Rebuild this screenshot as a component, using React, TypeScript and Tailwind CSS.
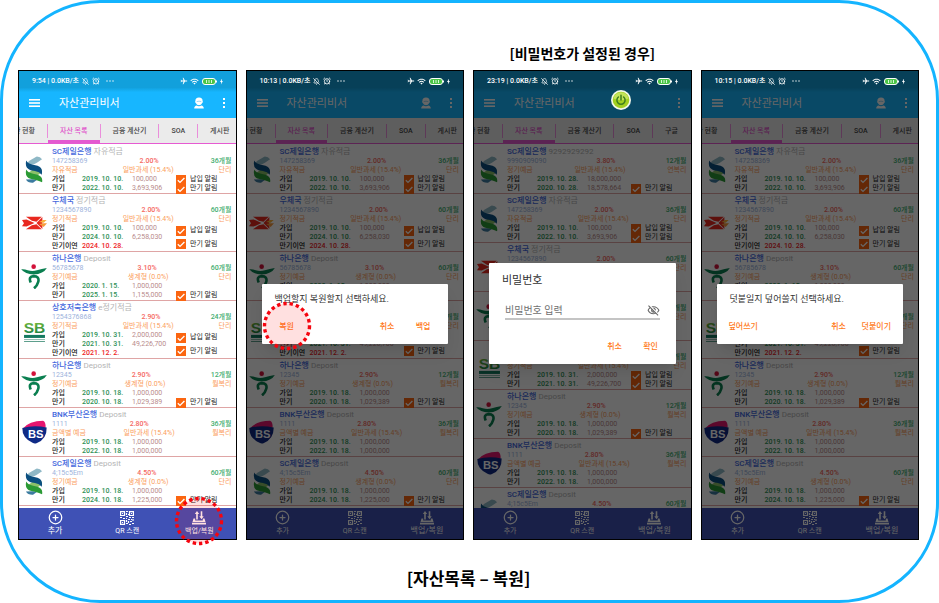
import React from "react";
import { CirclePlus, BellOff, AlarmClock } from "lucide-react";
import { MdWifi, MdBolt, MdOutlineVisibilityOff, MdAirplanemodeActive } from "react-icons/md";

type Logo = "sc" | "post" | "hana" | "sb" | "bs";

interface Entry {
  label: string;
  date: string;
  amount?: string;
  late?: boolean;
}

interface Asset {
  logo: Logo;
  bank: string;
  product: string;
  account: string;
  rate: string;
  months: string;
  type: string;
  tax: string;
  interest: string;
  entries: Entry[];
  alarms: string[];
}

const JOIN = "가입";
const DUE = "만기";
const BOTH = ["납입 알림", "만기 알림"];
const ONE = ["만기 알림"];

const scSavings: Asset = {
  logo: "sc", bank: "SC제일은행", product: "자유적금", account: "147258369", rate: "2.00%", months: "36개월",
  type: "자유적금", tax: "일반과세 (15.4%)", interest: "단리",
  entries: [
    { label: JOIN, date: "2019. 10. 10.", amount: "100,000" },
    { label: DUE, date: "2022. 10. 10.", amount: "3,693,906" },
  ],
  alarms: BOTH,
};

const post: Asset = {
  logo: "post", bank: "우체국", product: "정기적금", account: "1234567890", rate: "2.00%", months: "60개월",
  type: "정기적금", tax: "일반과세 (15.4%)", interest: "단리",
  entries: [
    { label: JOIN, date: "2019. 10. 10.", amount: "100,000" },
    { label: DUE, date: "2024. 10. 10.", amount: "6,258,030" },
    { label: "만기이연", date: "2024. 10. 28.", late: true },
  ],
  alarms: BOTH,
};

const hanaLong: Asset = {
  logo: "hana", bank: "하나은행", product: "Deposit", account: "56785678", rate: "3.10%", months: "60개월",
  type: "정기예금", tax: "생계형 (0.0%)", interest: "단리",
  entries: [
    { label: JOIN, date: "2020. 1. 15.", amount: "1,000,000" },
    { label: DUE, date: "2025. 1. 15.", amount: "1,155,000" },
  ],
  alarms: ONE,
};

const mutual: Asset = {
  logo: "sb", bank: "상호저축은행", product: "e정기적금", account: "1254376868", rate: "2.90%", months: "24개월",
  type: "정기적금", tax: "일반과세 (15.4%)", interest: "단리",
  entries: [
    { label: JOIN, date: "2019. 10. 31.", amount: "2,000,000" },
    { label: DUE, date: "2021. 10. 31.", amount: "49,226,700" },
    { label: "만기이연", date: "2021. 12. 2.", late: true },
  ],
  alarms: BOTH,
};

const hanaShort: Asset = {
  logo: "hana", bank: "하나은행", product: "Deposit", account: "12345", rate: "2.90%", months: "12개월",
  type: "정기예금", tax: "생계형 (0.0%)", interest: "월복리",
  entries: [
    { label: JOIN, date: "2019. 10. 18.", amount: "1,000,000" },
    { label: DUE, date: "2020. 10. 18.", amount: "1,029,389" },
  ],
  alarms: ONE,
};

const busan: Asset = {
  logo: "bs", bank: "BNK부산은행", product: "Deposit", account: "1111", rate: "2.80%", months: "36개월",
  type: "금액별 예금", tax: "일반과세 (15.4%)", interest: "월복리",
  entries: [
    { label: JOIN, date: "2019. 10. 18.", amount: "1,000,000" },
    { label: DUE, date: "2022. 10. 18.", amount: "1,000,000" },
  ],
  alarms: [],
};

const scDeposit: Asset = {
  logo: "sc", bank: "SC제일은행", product: "Deposit", account: "4;15c5Em", rate: "4.50%", months: "60개월",
  type: "정기예금", tax: "생계형 (0.0%)", interest: "단리",
  entries: [
    { label: JOIN, date: "2019. 10. 18.", amount: "1,000,000" },
    { label: DUE, date: "2024. 10. 18.", amount: "1,225,000" },
  ],
  alarms: ONE,
};

const scNine: Asset = {
  logo: "sc", bank: "SC제일은행", product: "9292929292", account: "9990909090", rate: "3.80%", months: "12개월",
  type: "정기예금", tax: "일반과세 (15.4%)", interest: "연복리",
  entries: [
    { label: JOIN, date: "2019. 10. 28.", amount: "18,000,000" },
    { label: DUE, date: "2020. 10. 28.", amount: "18,578,664" },
  ],
  alarms: ONE,
};

const withoutLate = (asset: Asset): Asset => ({
  ...asset,
  entries: asset.entries.filter((entry) => !entry.late),
});

const mainList = [scSavings, post, hanaLong, mutual, hanaShort, busan, scDeposit];
const lockedList = [scNine, scSavings, withoutLate(post), hanaLong, withoutLate(mutual), hanaShort, busan, scDeposit];

function BankLogo({ logo }: { logo: Logo }) {
  switch (logo) {
    case "sc":
      return (
        <svg viewBox="0 0 54 84" className="h-[27px] w-[18px]" aria-hidden="true">
          <path d="M34 2Q46 1 52 10L36 21Q24 29 12 26Q2 22 14 14Z" fill="#8fb8c6" />
          <path d="M50 42Q56 48 44 56L30 66L8 54L32 36Z" fill="#8cc06a" />
          <path d="M22 72L38 73L24 83Q8 84 2 73Z" fill="#3c7ba0" />
          <path d="M3 14Q8 24 24 27L38 30Q56 36 51 58Q44 50 30 47L16 44Q-3 38 3 14Z" fill="#0b4f80" />
          <path d="M3 42Q8 52 24 55L38 58Q56 64 52 82Q44 77 30 74L16 71Q-3 65 3 42Z" fill="#2b9a35" />
        </svg>
      );
    case "post":
      return (
        <svg viewBox="0 0 76 42" className="h-[14px] w-[25px]" aria-hidden="true">
          <path d="M12 2H60L44 17L30 14Z" fill="#e8281f" />
          <path d="M12 40H60L44 25L30 28Z" fill="#e8281f" />
          <path d="M0 12L14 10L38 21L14 32L0 31L6 22Z" fill="#e8281f" />
          <path d="M44 21L62 3V39Z" fill="#e8281f" />
          <path d="M52 18L64 12H75L66 20Z" fill="#f9b13a" />
          <path d="M52 24L66 22H76L66 33Z" fill="#f79a3c" />
        </svg>
      );
    case "hana":
      return (
        <svg viewBox="0 0 78 76" className="h-[25px] w-[26px]" aria-hidden="true">
          <path d="M0 16Q10 15 20 19Q34 24 48 19Q62 14 78 12Q68 30 38 32Q12 31 0 16Z" fill="#0a7f50" />
          <circle cx="38" cy="8" r="7" fill="#d2123a" />
          <path d="M29 56Q21 38 38 37Q56 37 52 54Q49 66 39 74" fill="none" stroke="#0a7f50" strokeWidth="8" />
        </svg>
      );
    case "sb":
      return (
        <svg viewBox="0 0 62 80" className="h-[27px] w-[21px]" aria-hidden="true">
          <defs>
            <linearGradient id="sbGreen" x1="0" y1="0" x2="0" y2="1">
              <stop offset="0" stopColor="#8cc63a" />
              <stop offset="1" stopColor="#0b7a43" />
            </linearGradient>
          </defs>
          <text x="31" y="50" textAnchor="middle" fill="url(#sbGreen)" className="font-['Liberation_Sans',sans-serif] text-[46px] font-bold">SB</text>
          <rect x="0" y="56" width="62" height="9" fill="#147a60" />
          <rect x="0" y="69" width="62" height="2" fill="#5d9f8d" />
          <rect x="0" y="74" width="62" height="3" fill="#5d9f8d" />
        </svg>
      );
    case "bs":
      return (
        <svg viewBox="0 0 76 72" className="h-[24px] w-[25px]" aria-hidden="true">
          <path d="M2 26Q22 2 64 2Q72 4 72 22L40 30Z" fill="#e5156f" />
          <path d="M1 24Q34 14 75 22Q76 58 44 70Q38 72 32 69Q0 54 1 24Z" fill="#0f2a86" />
          <text x="42" y="55" textAnchor="middle" fill="#fff" className="font-['Liberation_Sans',sans-serif] text-[34px] font-bold">BS</text>
        </svg>
      );
  }
}

function Alarm({ label }: { label: string }) {
  return (
    <label className="flex h-[9px] items-center gap-1 text-[7px] text-[#222]">
      <span className="grid size-[10px] shrink-0">
        <input type="checkbox" defaultChecked className="col-start-1 row-start-1 size-[10px] appearance-none bg-[#fb6510]" />
        <svg viewBox="0 0 10 10" className="pointer-events-none col-start-1 row-start-1 size-[10px]" aria-hidden="true">
          <path d="M1.800 5.200L4 7.400L8.400 3" fill="none" stroke="#fff" strokeWidth="1.3" />
        </svg>
      </span>
      {label}
    </label>
  );
}

function AssetRow({ asset }: { asset: Asset }) {
  return (
    <li className="flex border-t border-[#dfa5a5] pr-1 first:border-transparent">
      <div className="flex w-[33px] shrink-0 items-center justify-center pr-[3px]">
        <BankLogo logo={asset.logo} />
      </div>
      <div className="min-w-0 flex-1 text-[7px] leading-[9px] whitespace-nowrap">
        <h3 className="pt-[2px] text-[8px] leading-[10px] font-medium text-[#4468dd]">
          {asset.bank} <span className="font-normal text-[#b4b4b4]">{asset.product}</span>
        </h3>
        <div className="flex justify-between">
          <span className="text-[#9db3dc]">{asset.account}</span>
          <span className="font-medium text-[#f5695f]">{asset.rate}</span>
          <span className="font-medium text-[#44ae70]">{asset.months}</span>
        </div>
        <div className="flex justify-between text-[#fba060]">
          <span>{asset.type}</span>
          <span>{asset.tax}</span>
          <span>{asset.interest}</span>
        </div>
        <div className="flex">
          <div className="w-[124px] shrink-0">
            {asset.entries.map((entry) => (
              <div key={entry.label} className="grid grid-cols-[30px_50px_44px]">
                <span className="font-medium text-[#222]">{entry.label}</span>
                <span className={entry.late ? "font-medium text-[#ee1c25]" : "font-medium text-[#2f9157]"}>{entry.date}</span>
                <span className="text-[#b98c8c]">{entry.amount}</span>
              </div>
            ))}
          </div>
          <div className={asset.alarms.length > 1 ? "flex flex-col justify-around" : "flex flex-col justify-end"}>
            {asset.alarms.map((alarm) => (
              <Alarm key={alarm} label={alarm} />
            ))}
          </div>
        </div>
      </div>
    </li>
  );
}

function StatusBar({ time }: { time: string }) {
  return (
    <div className="relative z-20 flex h-[17px] items-center pt-[3px] pr-[11px] pl-[13px] text-[7px] leading-[9px] font-medium whitespace-nowrap text-white">
      <span>{time} | 0.0KB/초</span>
      <BellOff className="ml-[3px] size-[7px]" strokeWidth={2.5} />
      <AlarmClock className="ml-[3px] size-[8px]" strokeWidth={2.5} />
      <svg viewBox="0 0 8 2" className="ml-[6px] h-[2px] w-[8px]" fill="currentColor" aria-hidden="true">
        <circle cx="1" cy="1" r="0.7" />
        <circle cx="4" cy="1" r="0.7" />
        <circle cx="7" cy="1" r="0.7" />
      </svg>
      <MdAirplanemodeActive className="ml-auto size-[8px] rotate-90" />
      <MdWifi className="ml-[2px] size-[9px]" />
      <svg viewBox="0 0 15 7" className="ml-[3px] h-[7px] w-[15px]" aria-hidden="true">
        <rect x="0.5" y="0.5" width="13" height="6" rx="2.500" fill="#49c445" stroke="#fff" strokeWidth="1" />
        <rect x="14" y="2.500" width="1" height="2" fill="#fff" />
        <path d="M4.500 2V5M7 2V5M9.500 2V5" stroke="#d9f7d5" strokeWidth="1" />
      </svg>
      <MdBolt className="ml-px size-[7px]" />
    </div>
  );
}

function Header({ account }: { account: boolean }) {
  return (
    <header className="flex h-[30px] items-center px-[10px] text-white">
      <button type="button" aria-label="메뉴">
        <svg viewBox="0 0 11 8" className="block h-[8px] w-[11px]" fill="currentColor">
          <rect width="11" height="1.600" />
          <rect y="3.200" width="11" height="1.600" />
          <rect y="6.400" width="11" height="1.600" />
        </svg>
      </button>
      <h2 className="ml-[19px] pt-[2px] text-[11px] leading-[16px]">자산관리비서</h2>
      <div className="ml-auto flex items-center gap-[18px]">
        {account && (
          <button type="button" aria-label="계정">
            <svg viewBox="0 0 10 12" className="block h-[12px] w-[10px]" fill="currentColor">
              <path d="M5 .5C7.500 .5 8.700 2 8.600 4C9.300 5 8.600 5.800 8 6.200C7.500 7.500 6.300 8.200 5 8.200S2.500 7.500 2 6.200C1.400 5.800 .7 5 1.400 4C1.300 2 2.500 .5 5 .5Z" />
              <path d="M.2 11.500C.2 9.600 1.300 8.700 2.600 8.400Q5 10 7.400 8.400C8.700 8.700 9.800 9.600 9.800 11.500Z" />
              <path d="M2.700 4.600Q5 3.800 7.300 4.600" fill="none" stroke="#17a0e2" strokeWidth="0.6" opacity="0.7" />
            </svg>
          </button>
        )}
        <button type="button" aria-label="더보기">
          <svg viewBox="0 0 4 12" className="block h-[12px] w-[4px]" fill="currentColor">
            <rect x="1" y="1" width="2" height="2" />
            <rect x="1" y="5" width="2" height="2" />
            <rect x="1" y="9" width="2" height="2" />
          </svg>
        </button>
      </div>
    </header>
  );
}

function Divider() {
  return <span className="h-[14px] w-px shrink-0 self-center bg-[#ea8edb]" />;
}

function Tabs({ last }: { last: string }) {
  const tab = "shrink-0 border-b-[3px] border-transparent px-3 pt-1";
  return (
    <nav className="flex h-[26px] overflow-hidden border-b border-[#e65bd2] bg-[#ebebeb] text-[7px] font-medium whitespace-nowrap text-[#444]">
      <div className="flex w-[28px] shrink-0 justify-end overflow-hidden">
        <button type="button" className={tab}>자산 현황</button>
      </div>
      <Divider />
      <button type="button" className="shrink-0 border-b-[3px] border-[#e35ad0] px-3 pt-1 text-[#e04fca]">자산 목록</button>
      <Divider />
      <button type="button" className={tab}>금융 계산기</button>
      <Divider />
      <button type="button" className={tab}>SOA</button>
      <Divider />
      <button type="button" className={tab}>{last}</button>
    </nav>
  );
}

function TransferIcon() {
  return (
    <svg viewBox="0 0 14 14" className="size-[14px]" fill="currentColor" aria-hidden="true">
      <path d="M5 0L7.200 3H5.800V8.500H4.200V3H2.800Z" />
      <path d="M9.500 8.300L7.300 5.300H8.700V.3H10.300V5.300H11.700Z" />
      <path d="M1.500 7.500H3.200V9.500H10.800V7.500H12.500L13.500 11H.5Z" />
      <rect x="0" y="11.700" width="14" height="1.800" />
    </svg>
  );
}

function QrIcon() {
  return (
    <svg viewBox="0 0 14 14" className="size-[14px]" fill="none" stroke="currentColor" strokeWidth="1.2" aria-hidden="true">
      <path d="M.6 .6H4.500V4.500H.6ZM9.500 .6H13.400V4.500H9.500ZM.6 9.500H4.500V13.400H.6Z" />
      <path d="M2 2.500H3M11 2.500H12M2 11.500H3M6 .5H8M6.500 2V4M8 3.500H9M0 6.500H2M3 7.500H5M6 5.500H8M9 6.500H11M12 6.500H14M6 7.500H7M8 8.500H10M11 8.500H12M13 8V10M6.500 9V11M8.500 10V12M10 10.500H12M6 12.500H8M9 13.500H11M12 12.500H14" />
    </svg>
  );
}

function Highlight({ place }: { place: string }) {
  return (
    <svg
      viewBox="0 0 50 50"
      className={`pointer-events-none absolute left-1/2 size-[50px] -translate-x-1/2 ${place}`}
      aria-hidden="true"
    >
      <circle cx="25" cy="25" r="22.5" fill="#ff0000" fillOpacity="0.12" stroke="#f5050f" strokeWidth="3.400" strokeDasharray="3.400 2.950" />
    </svg>
  );
}

function BottomNav({ active, marked }: { active: "add" | "backup"; marked?: boolean }) {
  const item = "relative flex flex-col items-center justify-center gap-px pb-px";
  return (
    <nav className="grid h-[31px] grid-cols-3 bg-[#3f51b5] leading-[10px] text-white">
      <button type="button" className={item}>
        <CirclePlus className="size-[15px]" strokeWidth={2} />
        <span className={active === "add" ? "text-[8px]" : "text-[7px]"}>추가</span>
      </button>
      <button type="button" className={item}>
        <QrIcon />
        <span className="text-[7px]">QR 스캔</span>
      </button>
      <button type="button" className={item}>
        <TransferIcon />
        <span className={active === "backup" ? "text-[8px]" : "text-[7px]"}>백업/복원</span>
        {marked && <Highlight place="-top-3" />}
      </button>
    </nav>
  );
}

function DialogButton({ children, marked }: { children: string; marked?: boolean }) {
  return (
    <button type="button" className="relative h-5 min-w-9 px-[5px] text-[8px] font-medium text-[#ff7a22]">
      {children}
      {marked && <Highlight place="-top-4" />}
    </button>
  );
}

function ChoiceDialog({ message, first, last, marked }: { message: string; first: string; last: string; marked?: boolean }) {
  return (
    <div role="dialog" aria-label={message} className="w-full rounded-[1px] bg-white px-[7px] pt-[7px] pb-[7px] shadow-lg">
      <p className="px-[6px] text-[9px] leading-[16px] text-[#333]">{message}</p>
      <div className="mt-[10px] flex">
        <DialogButton marked={marked}>{first}</DialogButton>
        <div className="ml-auto flex">
          <DialogButton>취소</DialogButton>
          <DialogButton>{last}</DialogButton>
        </div>
      </div>
    </div>
  );
}

function PasswordDialog() {
  return (
    <div role="dialog" aria-label="비밀번호" className="w-full rounded-[1px] bg-white px-[7px] pt-[10px] pb-[7px] shadow-lg">
      <label htmlFor="password" className="block px-[6px] text-[11px] leading-[16px] text-[#333]">비밀번호</label>
      <div className="mx-[9px] mt-[14px] flex h-[17px] items-center border-b-2 border-[#c4c4c4] text-[#666]">
        <input
          id="password"
          type="password"
          placeholder="비밀번호 입력"
          className="min-w-0 flex-1 bg-transparent text-[10px] leading-[15px] outline-none placeholder:text-[#707070]"
        />
        <button type="button" aria-label="비밀번호 표시">
          <MdOutlineVisibilityOff className="size-[13px]" />
        </button>
      </div>
      <div className="mt-[17px] flex justify-end">
        <DialogButton>취소</DialogButton>
        <DialogButton>확인</DialogButton>
      </div>
    </div>
  );
}

function PowerButton() {
  return (
    <button type="button" aria-label="잠금 해제" className="absolute top-[19px] right-[60px] z-20">
      <svg viewBox="0 0 20 20" className="block size-[20px]">
        <circle cx="10" cy="10" r="10" fill="#f4f8ea" />
        <circle cx="10" cy="10" r="8.300" fill="#a2d020" />
        <path d="M2.500 8.500A7.600 7.600 0 0 1 17.500 8.500Q10 12 2.500 8.500Z" fill="#c3e35a" />
        <path d="M7.400 7A4.100 4.100 0 1 0 12.600 7M10 5.200V10" fill="none" stroke="#3f7d1c" strokeWidth="1.500" strokeLinecap="round" />
      </svg>
    </button>
  );
}

interface PhoneProps {
  time: string;
  assets: Asset[];
  lastTab: string;
  active: "add" | "backup";
  marked?: boolean;
  locked?: boolean;
  dialog?: React.ReactNode;
}

function Phone({ time, assets, lastTab, active, marked, locked, dialog }: PhoneProps) {
  return (
    <section className="relative flex h-[470px] min-w-0 flex-col border border-black bg-white font-[Roboto,'Noto_Sans_CJK_KR',sans-serif]">
      <div className="bg-linear-to-b from-[#12a0dc] from-35% to-[#17b6ff] to-45%">
        <StatusBar time={time} />
        <Header account={!locked} />
      </div>
      <Tabs last={lastTab} />
      <ul className="min-h-0 flex-1 overflow-hidden">
        {assets.map((asset) => (
          <AssetRow key={asset.account} asset={asset} />
        ))}
        <li className="border-t border-[#dfa5a5]" aria-hidden="true" />
      </ul>
      <BottomNav active={active} marked={marked} />
      {dialog && (
        <div className="absolute inset-0 z-10 flex items-center bg-black/60 px-[15px] pt-[17px]">{dialog}</div>
      )}
      {locked && <PowerButton />}
    </section>
  );
}

export default function App() {
  return (
    <div className="bg-white">
      <main className="min-h-screen rounded-[100px] border-[3px] border-[#14b4ff] pr-[17px] pb-[10px] pl-[15px] font-['Noto_Sans_CJK_KR',sans-serif] text-black">
        <div className="grid grid-cols-4 gap-x-[9px]">
          <h2 className="col-start-3 flex h-[67px] items-end justify-center pb-[7px] text-[14px] leading-[20px] font-bold whitespace-nowrap">
            [비밀번호가 설정된 경우]
          </h2>
          <div className="col-span-4 grid grid-cols-subgrid">
            <Phone time="9:54" assets={mainList} lastTab="게시판" active="add" marked />
            <Phone
              time="10:13"
              assets={mainList}
              lastTab="게시판"
              active="backup"
              dialog={<ChoiceDialog message="백업할지 복원할지 선택하세요." first="복원" last="백업" marked />}
            />
            <Phone time="23:19" assets={lockedList} lastTab="구글" active="backup" locked dialog={<PasswordDialog />} />
            <Phone
              time="10:15"
              assets={mainList}
              lastTab="게시판"
              active="backup"
              dialog={<ChoiceDialog message="덧붙일지 덮어쓸지 선택하세요." first="덮어쓰기" last="덧붙이기" />}
            />
          </div>
        </div>
        <h1 className="mt-[26px] text-center text-[17px] leading-[24px] font-bold">[자산목록 – 복원]</h1>
      </main>
    </div>
  );
}
